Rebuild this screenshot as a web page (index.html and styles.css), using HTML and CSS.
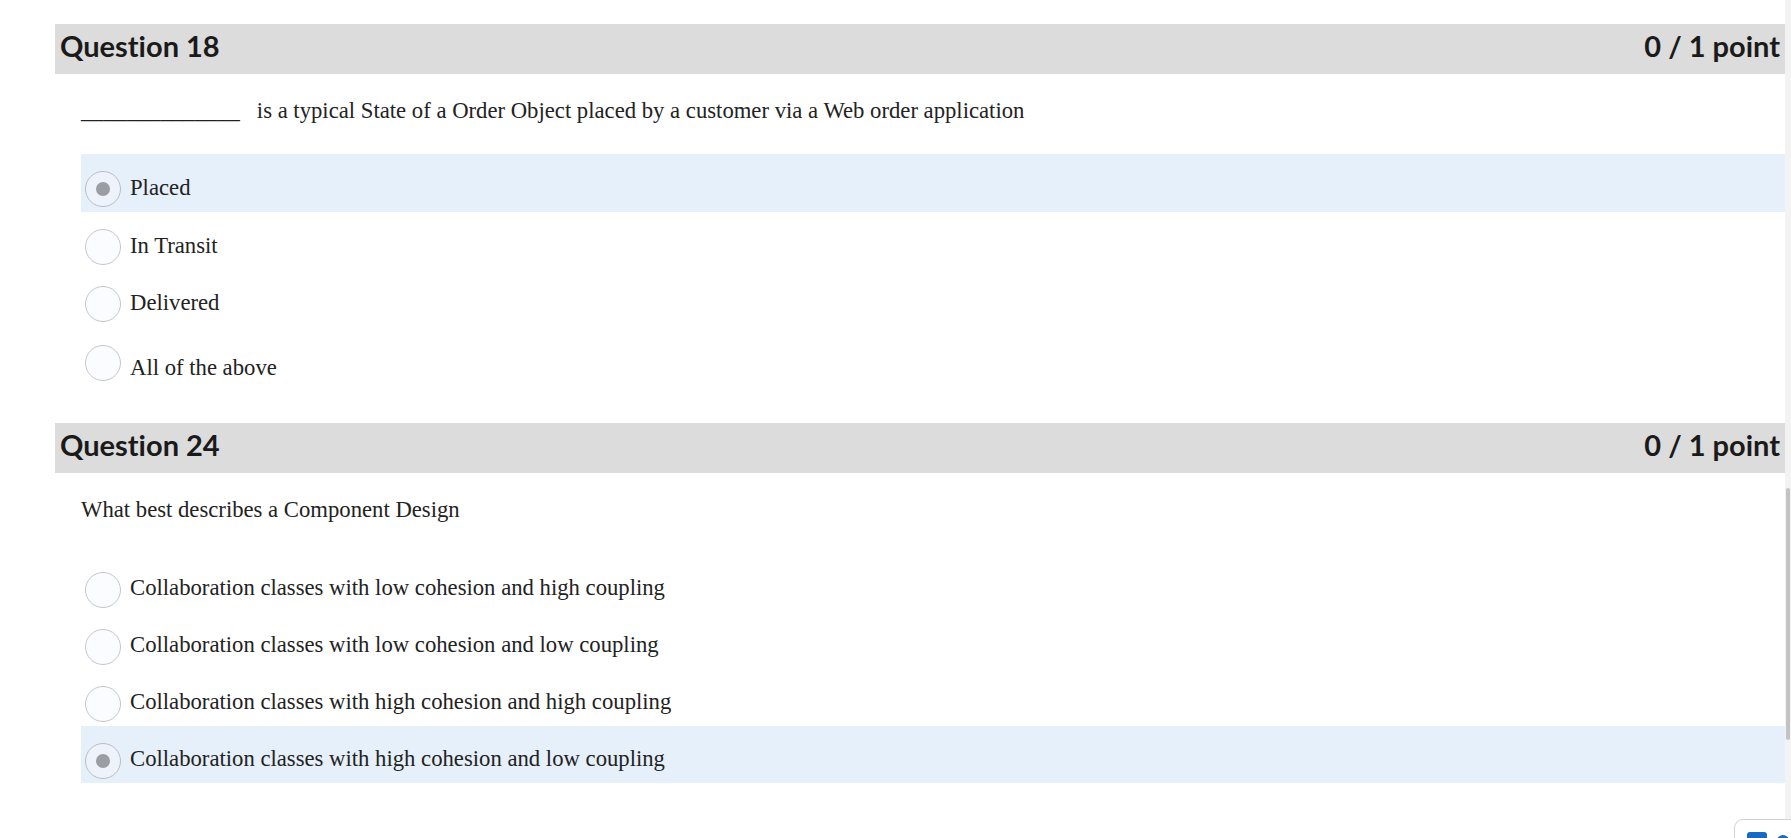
FILE: index.html
```html
<!DOCTYPE html>
<html lang="en">
<head>
<meta charset="utf-8">
<title>Quiz review</title>
<link rel="stylesheet" href="styles.css">
</head>
<body>
<div class="page">
  <main class="content">
    <section class="question">
      <div class="q-head">
        <h2 class="q-title">Question 18</h2>
        <span class="q-score">0 / 1 point</span>
      </div>
      <div class="q-body">
        <p class="q-text">______________&nbsp;&nbsp; is a typical State of a Order Object placed by a customer via a Web order application</p>
        <div class="options options-first">
          <div class="opt selected"><span class="radio checked"></span><span class="opt-text">Placed</span></div>
          <div class="opt"><span class="radio"></span><span class="opt-text">In Transit</span></div>
          <div class="opt"><span class="radio"></span><span class="opt-text">Delivered</span></div>
          <div class="opt opt-low"><span class="radio"></span><span class="opt-text">All of the above</span></div>
        </div>
      </div>
    </section>
    <section class="question question-second">
      <div class="q-head">
        <h2 class="q-title">Question 24</h2>
        <span class="q-score">0 / 1 point</span>
      </div>
      <div class="q-body">
        <p class="q-text">What best describes a Component Design</p>
        <div class="options options-second">
          <div class="opt"><span class="radio"></span><span class="opt-text">Collaboration classes with low cohesion and high coupling</span></div>
          <div class="opt"><span class="radio"></span><span class="opt-text">Collaboration classes with low cohesion and low coupling</span></div>
          <div class="opt"><span class="radio"></span><span class="opt-text">Collaboration classes with high cohesion and high coupling</span></div>
          <div class="opt selected"><span class="radio checked"></span><span class="opt-text">Collaboration classes with high cohesion and low coupling</span></div>
        </div>
      </div>
    </section>
  </main>
  <div class="scrollbar"><div class="thumb"></div></div>
  <div class="widget">
    <span class="widget-square"></span>
    <span class="widget-dot"></span>
  </div>
</div>
</body>
</html>
```

FILE: styles.css
```css
* { box-sizing: border-box; }
html, body {
  margin: 0;
  padding: 0;
  background: #ffffff;
  overflow: hidden;
}
.page {
  display: flex;
  width: 1791px;
  height: 838px;
  position: relative;
  overflow: hidden;
}
.content {
  flex: 1;
  padding: 24px 0 0 55px;
  color: #202122;
}
.question-second { margin-top: 39px; }
.q-head {
  display: flex;
  justify-content: space-between;
  align-items: flex-start;
  height: 50px;
  padding: 5px 5px 0 5px;
  background: #dcdcdc;
  font-family: Lato, "Noto Sans", sans-serif;
  font-weight: 700;
  font-size: 29px;
  line-height: 34px;
  color: #1a1a1a;
  font-variant-ligatures: none;
}
.q-title {
  margin: 0;
  font-size: 29px;
  font-weight: 700;
}
.q-body {
  padding-left: 26px;
  font-family: "Liberation Serif", "Times New Roman", serif;
  font-size: 22.7px;
  color: #222222;
}
.q-text {
  margin: 24px 0 30px;
  line-height: 26px;
}
.question-second .q-text { margin: 24px 0 32px; }
.opt {
  display: flex;
  align-items: flex-start;
  height: 57px;
  padding: 17px 0 0 4px;
  line-height: 26px;
}
.options-first .opt { height: 57.5px; }
.options-first .opt-text { padding-top: 4px; }
.opt.selected { background: #e6f0fa; }
.radio {
  flex: none;
  width: 36px;
  height: 36px;
  border: 1px solid #c4c6ca;
  border-radius: 50%;
  background: #fafcff;
  display: flex;
  align-items: center;
  justify-content: center;
}
.radio.checked {
  background: #eef3fb;
  border-color: #b9bcc2;
}
.radio.checked::after {
  content: "";
  width: 14px;
  height: 14px;
  border-radius: 50%;
  background: #9a9da4;
}
.opt-text {
  margin-left: 9px;
  padding-top: 3px;
}
.options-first .opt-low { padding-top: 18px; }
.options-first .opt-low .opt-text { padding-top: 10px; }
.scrollbar {
  flex: none;
  width: 6px;
  background: #f3f3f3;
  padding-top: 488px;
}
.thumb {
  width: 4px;
  margin-left: 1px;
  height: 252px;
  background: #c3c3c3;
  border-radius: 2px;
}
.widget {
  position: absolute;
  left: 1734px;
  top: 819px;
  width: 90px;
  height: 60px;
  border: 1px solid #cfd3d8;
  border-radius: 9px;
  background: #ffffff;
}
.widget-square {
  position: absolute;
  left: 12px;
  top: 12px;
  width: 20px;
  height: 20px;
  border-radius: 3px;
  background: #1769c2;
}
.widget-dot {
  position: absolute;
  left: 42px;
  top: 15px;
  width: 12px;
  height: 12px;
  border-radius: 50%;
  border: 3px solid #1769c2;
}
```
